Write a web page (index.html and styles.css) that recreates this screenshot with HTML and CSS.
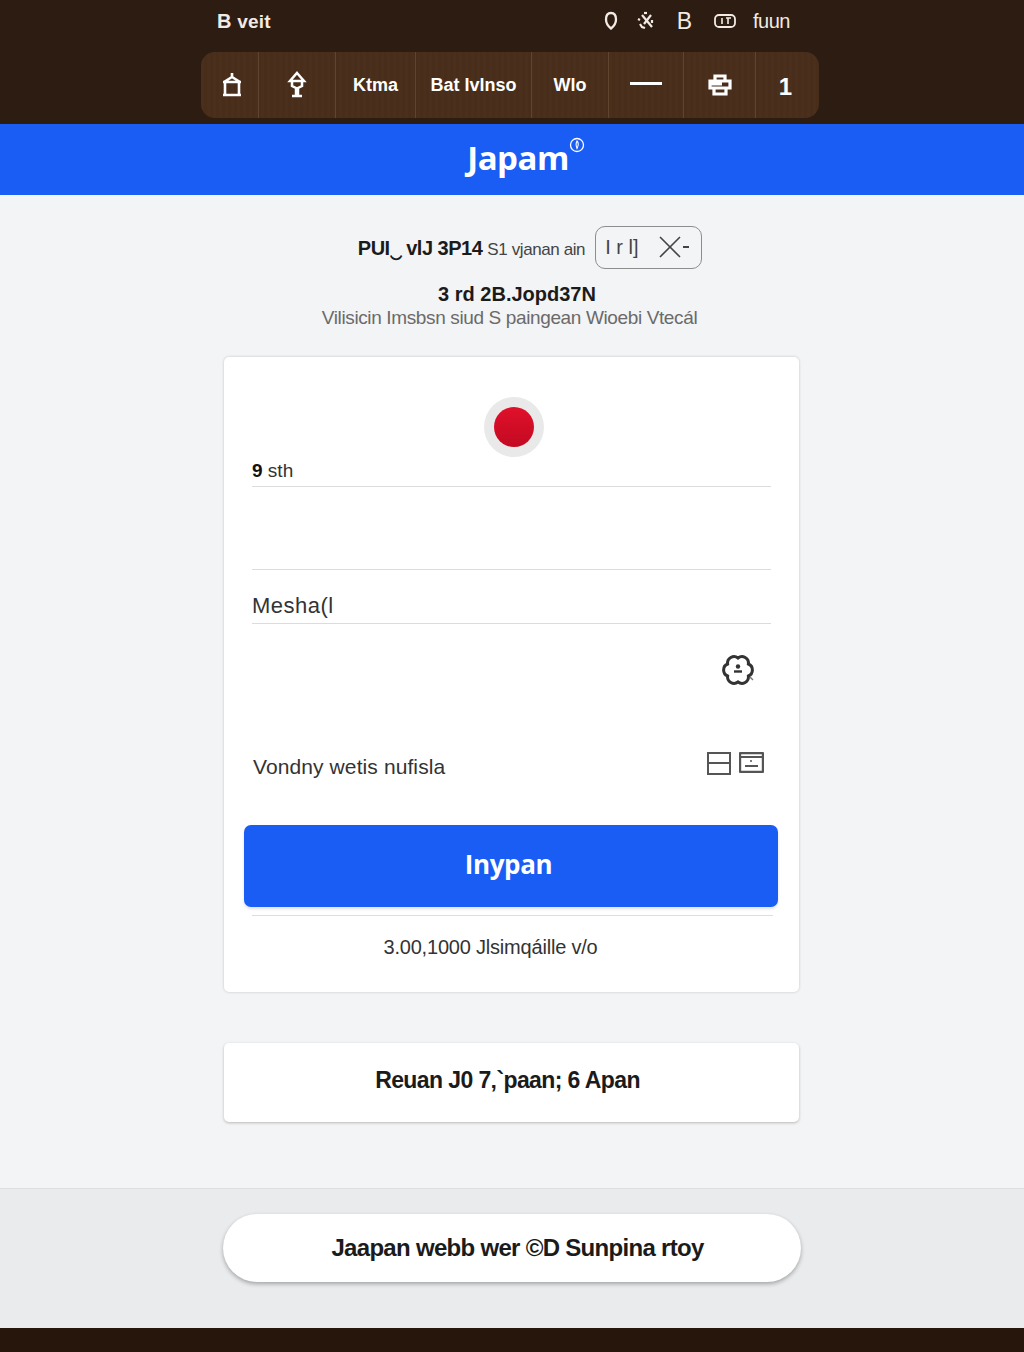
FILE: index.html
```html
<!DOCTYPE html>
<html lang="en">
<head>
  <meta charset="UTF-8" />
  <meta name="viewport" content="width=device-width, initial-scale=1.0" />
  <title>Japam</title>
  <link rel="stylesheet" href="styles.css">
</head>
<body>
  <header class="top">
    <div class="status">
      <span class="status-left"><b>B</b> veit</span>
      <div class="status-icons">
        <svg class="ic-pin" width="16" height="20" viewBox="0 0 16 20"><path d="M8 2c3.300 0 5 2.800 5 6.500 0 3.500-2.500 7-5 9-2.500-2-5-5.500-5-9C3 4.800 4.700 2 8 2z" fill="none" stroke="#f2ebe3" stroke-width="2.300"/></svg>
        <svg class="ic-tool" width="20" height="20" viewBox="0 0 20 20"><g fill="none" stroke="#f2ebe3" stroke-width="2.200"><path d="M7 4l10 12"/><path d="M16 4l-7 9"/><path d="M3 8l2 1"/><path d="M5 13l2 3 3 1"/><path d="M9 2h3"/><path d="M17 9v3"/></g></svg>
        <span class="status-b">B</span>
        <svg class="ic-card" width="24" height="16" viewBox="0 0 24 16"><rect x="2" y="2" width="20" height="12" rx="4" fill="none" stroke="#f2ebe3" stroke-width="1.800"/><path d="M9 5v6M13 5h5M15 5v6" fill="none" stroke="#f2ebe3" stroke-width="1.600"/></svg>
        <span class="status-txt">fuun</span>
      </div>
    </div>
    <nav class="nav">
      <div class="nav-cell nav-home">
        <svg width="22" height="26" viewBox="0 0 22 26"><path d="M11 1v4M3 10l8-5 8 5M2 10h18M4 10v13h14V10M2 23h18" fill="none" stroke="#fff" stroke-width="2.600"/></svg>
      </div>
      <div class="nav-cell">
        <svg width="22" height="28" viewBox="0 0 22 28"><path d="M11 2l7 8H4zM6 10v5l4 2v8H6M16 10v5l-4 2v8h4" fill="none" stroke="#fff" stroke-width="2.500"/></svg>
      </div>
      <div class="nav-cell">Ktma</div>
      <div class="nav-cell">Bat Ivlnso</div>
      <div class="nav-cell">Wlo</div>
      <div class="nav-cell"><span class="nav-dash"></span></div>
      <div class="nav-cell">
        <svg width="26" height="22" viewBox="0 0 26 22"><path d="M8 6V2h10v4M3 7h20v7H3zM7 14v6h12v-6M3 10h12" fill="none" stroke="#fff" stroke-width="3.200"/></svg>
      </div>
      <div class="nav-cell nav-num">1</div>
    </nav>
  </header>

  <div class="brand">
    <span class="brand-name">Japam</span>
    <svg class="brand-mark" width="16" height="16" viewBox="0 0 16 16"><circle cx="8" cy="8" r="6.500" fill="none" stroke="#fff" stroke-width="1.300"/><path d="M8 4c2 2 1.500 4.500 0 7.500C7 9 6.500 6.500 8 4z" fill="none" stroke="#fff" stroke-width="1.100"/></svg>
  </div>

  <main class="main">
    <div class="intro-row">
      <span class="intro-text"><b>PUI‿ vlJ 3P14</b> <span class="intro-light">S1 vjanan ain</span></span>
      <div class="lang-box">
        <span class="lang-txt">I r l]</span>
        <svg width="34" height="24" viewBox="0 0 34 24"><path d="M2 2l20 20M22 2L2 22" fill="none" stroke="#444" stroke-width="1.600"/><path d="M25 12h6" fill="none" stroke="#444" stroke-width="2"/></svg>
      </div>
    </div>
    <div class="intro-bold">3 rd 2B.Jopd37N</div>
    <div class="intro-sub">Vilisicin Imsbsn siud S paingean Wioebi Vtecál</div>

    <section class="card">
      <div class="flag"><span class="flag-sun"></span></div>
      <div class="field field-first"><b>9</b> <span>sth</span></div>
      <div class="field field-empty"></div>
      <div class="field field-name">Mesha(l</div>
      <div class="icon-row">
        <svg width="34" height="34" viewBox="0 0 34 34"><path d="M17 5A6.500 6.500 0 0 1 27.400 11A6.500 6.500 0 0 1 27.400 23A6.500 6.500 0 0 1 17 29A6.500 6.500 0 0 1 6.600 23A6.500 6.500 0 0 1 6.600 11A6.500 6.500 0 0 1 17 5z" fill="none" stroke="#333" stroke-width="3"/><circle cx="17" cy="13.500" r="2.200" fill="#333"/><path d="M13 18.500h8" fill="none" stroke="#333" stroke-width="2.400"/><path d="M29 24l3 3" fill="none" stroke="#777" stroke-width="1.400"/></svg>
      </div>
      <div class="check-row">
        <span class="check-label">Vondny wetis nufisla</span>
        <div class="check-icons">
          <svg width="24" height="23" viewBox="0 0 24 23"><rect x="1" y="1" width="22" height="21" fill="none" stroke="#555" stroke-width="2"/><path d="M1 11h22" fill="none" stroke="#555" stroke-width="2"/></svg>
          <svg width="25" height="21" viewBox="0 0 25 21"><rect x="1" y="1" width="23" height="19" rx="1" fill="none" stroke="#555" stroke-width="2.400"/><path d="M1 5h23M6 14h13" fill="none" stroke="#555" stroke-width="2"/><path d="M12 8v2" fill="none" stroke="#555" stroke-width="1.500"/></svg>
        </div>
      </div>
      <button class="btn-main">Inypan</button>
      <div class="btn-rule"></div>
      <div class="card-note">3.00,1000 Jlsimqáille v/o</div>
    </section>

    <section class="card-small">Reuan J0 7‚`paan; 6 Apan</section>
  </main>

  <footer class="foot">
    <button class="foot-pill">Jaapan webb wer ©D Sunpina rtoy</button>
  </footer>
  <div class="bottom-bar"></div>
</body>
</html>
```

FILE: styles.css
```css
* {
  box-sizing: border-box;
  margin: 0;
  padding: 0;
}
body {
  font-family: "Liberation Sans", Arial, sans-serif;
  background: #f3f4f5;
  color: #1b1b1b;
  width: 1024px;
  height: 1352px;
  overflow: hidden;
}
svg {
  display: block;
}

.top {
  height: 124px;
  background: #2d1c11;
  padding: 0 205px 0 201px;
}
.status {
  height: 52px;
  display: flex;
  align-items: center;
  justify-content: space-between;
  color: #f2ebe3;
  padding: 0 29px 10px 16px;
}
.status-left {
  font-size: 19px;
  font-weight: bold;
  letter-spacing: 0.2px;
}
.status-left b {
  font-size: 20px;
}
.status-icons {
  display: flex;
  align-items: center;
}
.ic-pin {
  margin-right: 16px;
}
.ic-tool {
  margin-right: 22px;
}
.status-b {
  font-size: 23px;
  margin-right: 21px;
}
.ic-card {
  margin-right: 16px;
}
.status-txt {
  font-size: 20px;
  letter-spacing: -0.5px;
}

.nav {
  display: grid;
  grid-template-columns: 58px 77px 80px 116px 77px 75px 72px 63px;
  height: 66px;
  width: 618px;
  background: repeating-linear-gradient(90deg, #4a301c 0, #4a301c 3px, #472d1a 3px, #472d1a 6px);
  border-radius: 14px;
  color: #fff;
  font-size: 18px;
  font-weight: bold;
}
.nav-cell {
  display: flex;
  align-items: center;
  justify-content: center;
  border-right: 1px solid #5f452f;
}
.nav-cell:last-child {
  border-right: none;
}
.nav-home {
  padding-left: 4px;
}
.nav-dash {
  width: 32px;
  height: 3px;
  background: #fff;
  margin-bottom: 4px;
}
.nav-num {
  font-size: 24px;
  padding: 3px 4px 0 0;
}

.brand {
  height: 71px;
  background: #1a5df5;
  display: flex;
  justify-content: center;
  align-items: flex-start;
  color: #fff;
  padding-left: 28px;
}
.brand-name {
  font-family: "Open Sans", sans-serif;
  font-size: 33px;
  font-weight: 700;
  line-height: 44px;
  margin-top: 12px;
  letter-spacing: -0.5px;
}
.brand-mark {
  margin-top: 13px;
}

.main {
  height: 993px;
  padding-top: 31px;
}
.intro-row {
  display: flex;
  justify-content: center;
  align-items: center;
  gap: 10px;
  padding-left: 36px;
  height: 42px;
}
.intro-text {
  font-size: 20px;
  letter-spacing: -0.5px;
}
.intro-light {
  font-size: 17px;
  color: #444;
  letter-spacing: -0.4px;
}
.lang-box {
  width: 107px;
  height: 43px;
  border: 1px solid #8d8d8d;
  border-radius: 10px;
  display: flex;
  align-items: center;
  justify-content: space-between;
  padding: 0 9px;
  font-size: 20px;
  color: #444;
}
.intro-bold {
  text-align: center;
  font-size: 20px;
  font-weight: bold;
  line-height: 22px;
  margin-top: 15px;
  padding-left: 10px;
}
.intro-sub {
  text-align: center;
  font-size: 19px;
  color: #6a6a6a;
  line-height: 24px;
  padding: 1px 5px 0 0;
  letter-spacing: -0.37px;
}

.card {
  width: 575px;
  height: 635px;
  margin: 27px 0 0 224px;
  background: #fff;
  border-radius: 5px;
  box-shadow: 0 0 3px rgba(0, 0, 0, 0.2);
  padding-top: 40px;
}
.flag {
  width: 60px;
  height: 60px;
  border-radius: 50%;
  background: #e9e9e9;
  margin-left: 260px;
  display: flex;
  align-items: center;
  justify-content: center;
}
.flag-sun {
  width: 40px;
  height: 40px;
  border-radius: 50%;
  background: linear-gradient(#e0102a, #c30a22);
}
.field {
  margin: 0 28px;
  border-bottom: 1px solid #dcdcdc;
  font-size: 19px;
  color: #333;
}
.field-first {
  height: 30px;
  line-height: 27px;
}
.field-first b {
  color: #111;
}
.field-empty {
  height: 83px;
}
.field-name {
  height: 54px;
  padding-top: 25px;
  font-size: 22px;
  line-height: 22px;
  letter-spacing: 0.5px;
}
.icon-row {
  display: flex;
  justify-content: flex-end;
  padding: 29px 44px 0 0;
  height: 126px;
}
.check-row {
  display: flex;
  justify-content: space-between;
  align-items: flex-start;
  margin: 0 35px 0 29px;
  height: 75px;
  padding-top: 2px;
}
.check-label {
  font-size: 21px;
  line-height: 26px;
  margin-top: 2px;
  color: #333;
  letter-spacing: 0.1px;
}
.check-icons {
  display: flex;
  gap: 8px;
}
.btn-main {
  display: block;
  width: 534px;
  height: 82px;
  margin-left: 20px;
  border: none;
  border-radius: 7px;
  background: #1a5df5;
  color: #fff;
  font-family: "Open Sans", sans-serif;
  font-size: 26px;
  font-weight: 700;
  padding: 0 5px 4px 0;
  letter-spacing: -0.4px;
  box-shadow: 0 2px 3px rgba(0, 0, 0, 0.12);
}
.btn-rule {
  height: 1px;
  margin: 8px 26px 0 28px;
  background: #dedede;
}
.card-note {
  font-size: 20px;
  text-align: center;
  line-height: 26px;
  margin-top: 18px;
  padding-right: 42px;
  color: #333;
  letter-spacing: -0.2px;
}

.card-small {
  width: 575px;
  height: 79px;
  margin: 51px 0 0 224px;
  background: #fff;
  border-radius: 5px;
  box-shadow: 0 1px 3px rgba(0, 0, 0, 0.25);
  display: flex;
  align-items: center;
  justify-content: center;
  font-size: 23px;
  font-weight: bold;
  letter-spacing: -0.6px;
  padding: 0 8px 4px 0;
}

.foot {
  height: 140px;
  background: #e9ebed;
  border-top: 1px solid #dcdfe1;
  padding: 25px 0 0 223px;
}
.foot-pill {
  width: 578px;
  height: 68px;
  border: none;
  border-radius: 34px;
  background: #fff;
  box-shadow: 0 2px 4px rgba(0, 0, 0, 0.3);
  font-family: "Liberation Sans", Arial, sans-serif;
  font-size: 24px;
  font-weight: bold;
  color: #1b1b1b;
  letter-spacing: -0.7px;
  padding-left: 11px;
}
.bottom-bar {
  height: 24px;
  background: #26160c;
}
```
